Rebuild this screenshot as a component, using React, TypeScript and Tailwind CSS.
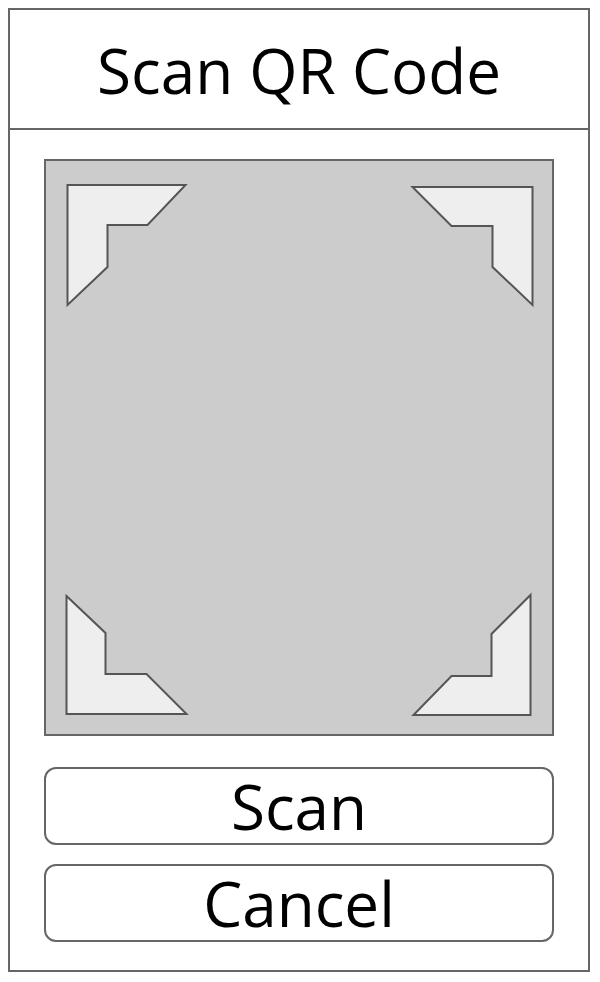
const corners = [
  "21,24 139,24 101,64 61,64 61,106 21,144",
  "366,26 486,26 486,144 446,106 446,65 405,65",
  "20,435 59,472 59,513 100,513 140,553 20,553",
  "484,434 484,554 367,554 405,515 445,515 445,473",
]

function Viewfinder() {
  return (
    <div className="h-[577px] w-full border-2 border-[#666] bg-[#ccc]">
      <svg className="block h-full w-full" viewBox="0 0 505 573">
        {corners.map((pts) => (
          <polygon
            key={pts}
            points={pts}
            fill="#eee"
            stroke="#555"
            strokeWidth="2"
            strokeLinejoin="miter"
          />
        ))}
      </svg>
    </div>
  )
}

export default function App() {
  return (
    <div className="h-[982px] w-[600px] bg-white p-2" style={{ fontFamily: '"Open Sans", sans-serif' }}>
      <div className="flex h-[964px] w-[582px] flex-col border-2 border-[#666]">
        <header className="flex h-[120px] items-center justify-center border-b-2 border-[#666]">
          <h1 className="pt-[2px] text-[62px] leading-none text-black">Scan QR Code</h1>
        </header>
        <main className="flex flex-col px-[34px] pt-[29px]">
          <Viewfinder />
          <div className="mt-[31px] flex flex-col gap-[19px]">
            <button
              type="button"
              className="flex h-[78px] w-full items-center justify-center rounded-xl border-2 border-[#666] text-[62px] leading-none text-black"
            >
              Scan
            </button>
            <button
              type="button"
              className="flex h-[78px] w-full items-center justify-center rounded-xl border-2 border-[#666] text-[62px] leading-none text-black"
            >
              Cancel
            </button>
          </div>
        </main>
      </div>
    </div>
  )
}
